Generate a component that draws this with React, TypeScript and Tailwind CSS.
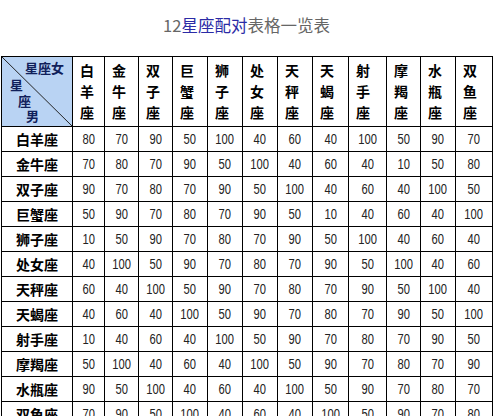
import React from "react";

const signs = ["白羊座","金牛座","双子座","巨蟹座","狮子座","处女座","天秤座","天蝎座","射手座","摩羯座","水瓶座","双鱼座"];
const data: number[][] = [
  [80,70,90,50,100,40,60,40,100,50,90,70],
  [70,80,70,90,50,100,40,60,40,10,50,80],
  [90,70,80,70,90,50,100,40,60,40,100,50],
  [50,90,70,80,70,90,50,10,40,60,40,100],
  [10,50,90,70,80,70,90,50,100,40,60,40],
  [40,100,50,90,70,80,70,90,50,100,40,60],
  [60,40,100,50,90,70,80,70,90,50,100,40],
  [40,60,40,100,50,90,70,80,70,90,50,100],
  [10,40,60,40,100,50,90,70,80,70,90,50],
  [50,100,40,60,40,100,50,90,70,80,70,90],
  [90,50,100,40,60,40,100,50,90,70,80,70],
  [70,90,50,100,40,60,40,100,50,90,70,80],
];
const widths = [71,32,34,34,35,35,35,35,36,38,34,35,37];

export default function App() {
  return (
    <div className="w-[493px] h-[416px] overflow-hidden bg-white" style={{ fontFamily: '"Noto Sans CJK SC", sans-serif' }}>
      <div className="h-[56px] pt-[13px] text-center text-[16.5px] leading-[24px] text-[#666]">
        12<span className="text-[#2b2ba6]">星座配对</span>表格一览表
      </div>
      <div className="pl-[1px]">
        <table className="table-fixed border-collapse" style={{ width: widths.reduce((a, b) => a + b, 0) }}>
          <colgroup>
            {widths.map((w, i) => (
              <col key={i} style={{ width: w }} />
            ))}
          </colgroup>
          <thead>
            <tr>
              <th className="relative h-[69px] border border-black bg-[#b9d3f3] p-0 align-top">
                <svg className="absolute inset-0" width="100%" height="100%" viewBox="0 0 71 69" preserveAspectRatio="none">
                  <line x1="0" y1="0" x2="71" y2="69" stroke="#222" strokeWidth="1" />
                </svg>
                <div className="relative h-[69px] text-[13px] font-bold leading-[16px] text-[#10205a]">
                  <span className="absolute left-[23px] top-[3px]">星座女</span>
                  <span className="absolute left-[8px] top-[20px]">星</span>
                  <span className="absolute left-[16px] top-[36px]">座</span>
                  <span className="absolute left-[24px] top-[51px]">男</span>
                </div>
              </th>
              {signs.map((s) => (
                <th key={s} className="h-[69px] border border-black p-0 pl-[7px] text-left align-top font-bold text-[14px] leading-[21px] text-black">
                  <div className="flex flex-col pt-[3px]">
                    {s.split("").map((c, i) => (
                      <span key={i}>{c}</span>
                    ))}
                  </div>
                </th>
              ))}
            </tr>
          </thead>
          <tbody>
            {signs.map((s, r) => (
              <tr key={s}>
                <td className="h-[25px] border border-black p-0 text-center text-[14px] font-bold leading-[20px] text-black">{s}</td>
                {data[r].map((v, c) => (
                  <td
                    key={c}
                    className="h-[25px] border border-black p-0 text-center text-[14px] leading-[20px] text-[#222]"
                    style={{ fontFamily: '"Liberation Sans", sans-serif' }}
                  >
                    <span className="inline-block scale-x-80">{v}</span>
                  </td>
                ))}
              </tr>
            ))}
          </tbody>
        </table>
      </div>
    </div>
  );
}
